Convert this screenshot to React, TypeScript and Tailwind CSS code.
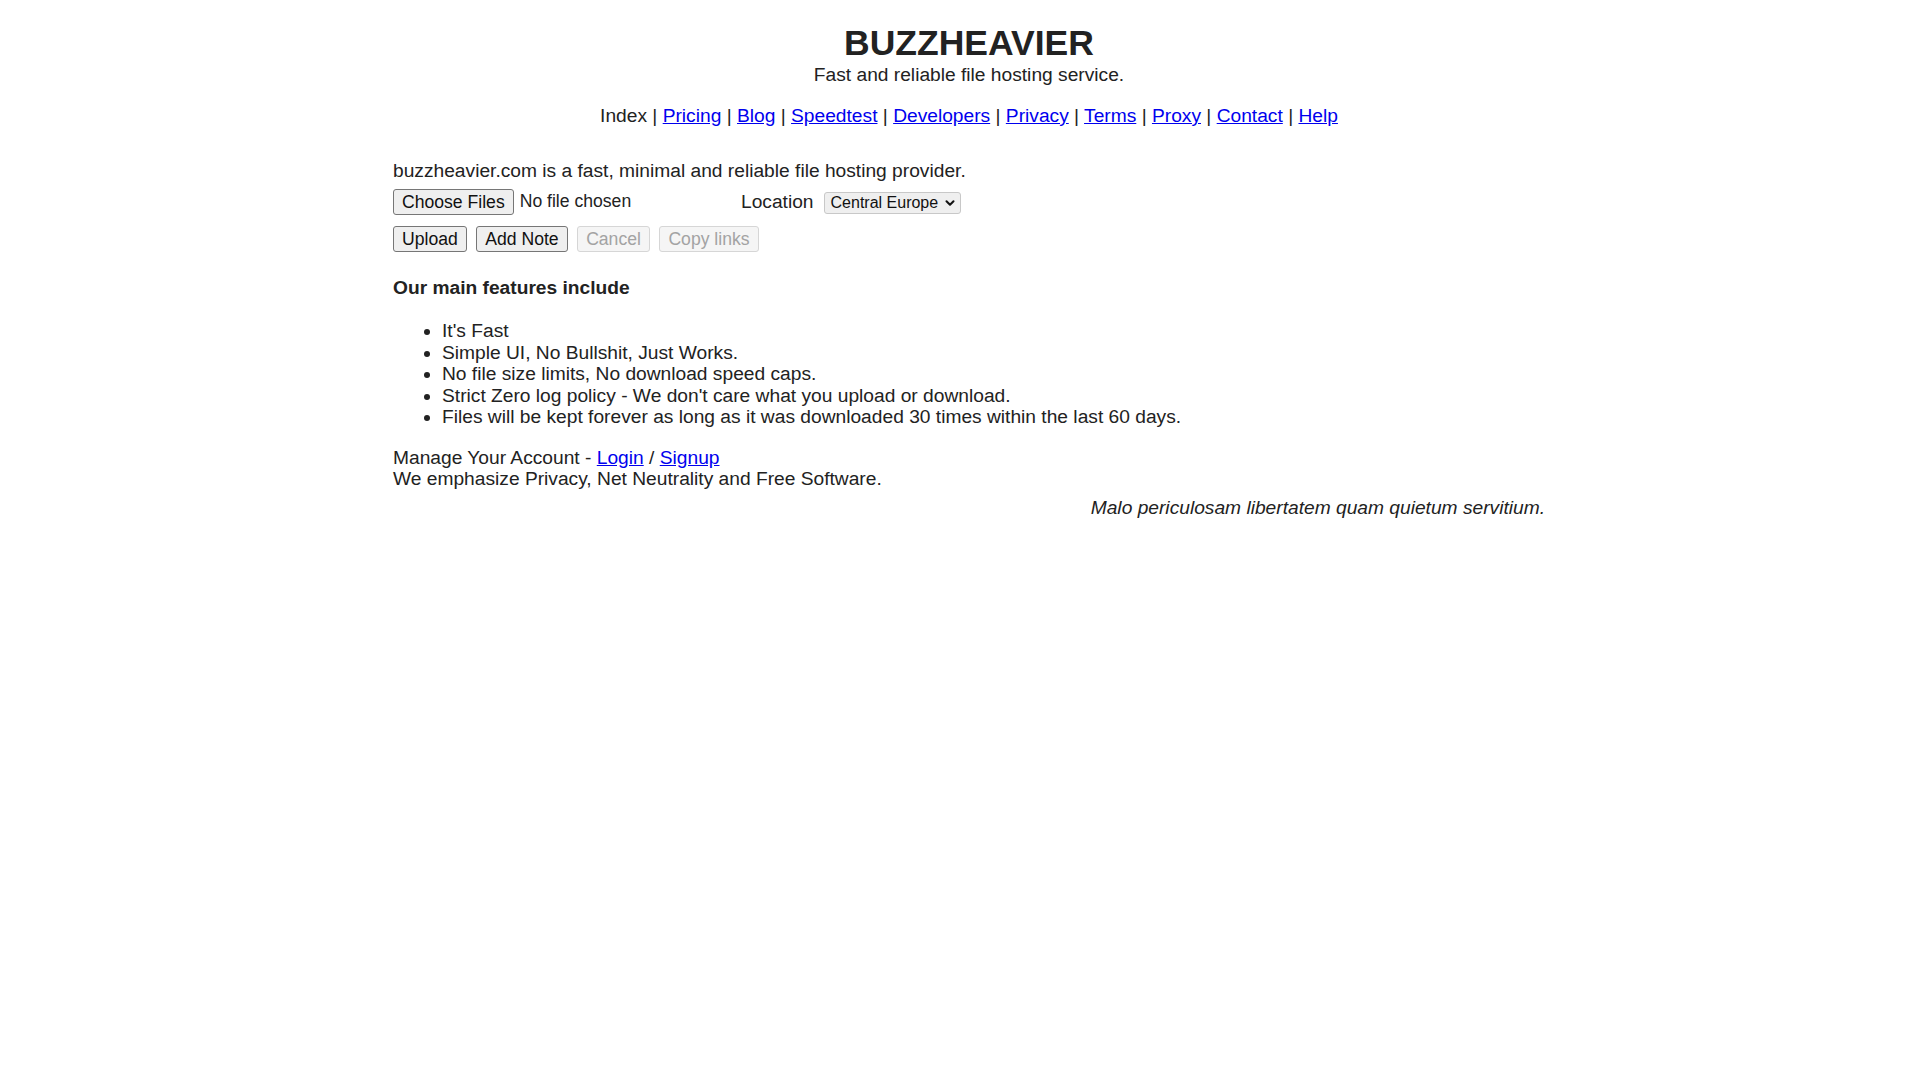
import { ChevronDown } from 'lucide-react'

const navLinks = ['Pricing', 'Blog', 'Speedtest', 'Developers', 'Privacy', 'Terms', 'Proxy', 'Contact', 'Help']

const features = [
  "It's Fast",
  'Simple UI, No Bullshit, Just Works.',
  'No file size limits, No download speed caps.',
  "Strict Zero log policy - We don't care what you upload or download.",
  'Files will be kept forever as long as it was downloaded 30 times within the last 60 days.',
]

function Btn({ label, disabled }: { label: string; disabled?: boolean }) {
  return (
    <button
      disabled={disabled}
      className={`h-[26px] px-[8px] text-[17.6px] leading-[20px] rounded-[3px] border ${
        disabled
          ? 'bg-[#f5f5f5] border-[#d6d6d6] text-[#a3a3a3]'
          : 'bg-[#efefef] border-[#767676] text-[#111]'
      }`}
    >
      {label}
    </button>
  )
}

export default function App() {
  return (
    <div className="min-h-screen bg-white pl-[18px] text-[#222] font-['Liberation_Sans',Arial,sans-serif] text-[19.2px] leading-[21.6px]">
      <div className="w-[1152px] mx-auto pt-[23px]">
        <header className="text-center">
          <h1 className="text-[35.5px] leading-[41px] font-bold">BUZZHEAVIER</h1>
          <p className="leading-[22px]">Fast and reliable file hosting service.</p>
          <nav className="mt-[19px] leading-[22px]">
            Index
            {navLinks.map((l) => (
              <span key={l}>
                {' | '}
                <a href="#" className="text-[#0000ee] underline">
                  {l}
                </a>
              </span>
            ))}
          </nav>
        </header>

        <section className="mt-[33px]">
          <p className="leading-[22px]">buzzheavier.com is a fast, minimal and reliable file hosting provider.</p>

          <div className="mt-[7px] flex items-center h-[26px]">
            <div className="w-[348px] flex items-center gap-[6px] text-[17.6px] text-[#222]">
              <Btn label="Choose Files" />
              <span>No file chosen</span>
            </div>
            <span>Location</span>
            <div className="ml-[10px] mt-[2px] h-[22px] w-[137px] flex items-center justify-between pl-[6px] pr-[3px] bg-[#efefef] border border-[#c8c8c8] rounded-[3px] text-[16px] text-[#111]">
              <span>Central Europe</span>
              <ChevronDown size={14} strokeWidth={3.5} className="text-[#111]" />
            </div>
          </div>

          <div className="mt-[11px] flex items-center gap-[9.5px]">
            <Btn label="Upload" />
            <Btn label="Add Note" />
            <Btn label="Cancel" disabled />
            <Btn label="Copy links" disabled />
          </div>
        </section>

        <section className="mt-[25px]">
          <h2 className="font-bold leading-[22px]">Our main features include</h2>
          <ul className="mt-[21px] pl-[49px] list-disc leading-[21.5px]">
            {features.map((f) => (
              <li key={f}>{f}</li>
            ))}
          </ul>
        </section>

        <section className="mt-[19px]">
          <p>
            Manage Your Account -{' '}
            <a href="#" className="text-[#0000ee] underline">
              Login
            </a>{' '}
            /{' '}
            <a href="#" className="text-[#0000ee] underline">
              Signup
            </a>
          </p>
          <p>We emphasize Privacy, Net Neutrality and Free Software.</p>
          <p className="mt-[7px] text-right italic">Malo periculosam libertatem quam quietum servitium.</p>
        </section>
      </div>
    </div>
  )
}
